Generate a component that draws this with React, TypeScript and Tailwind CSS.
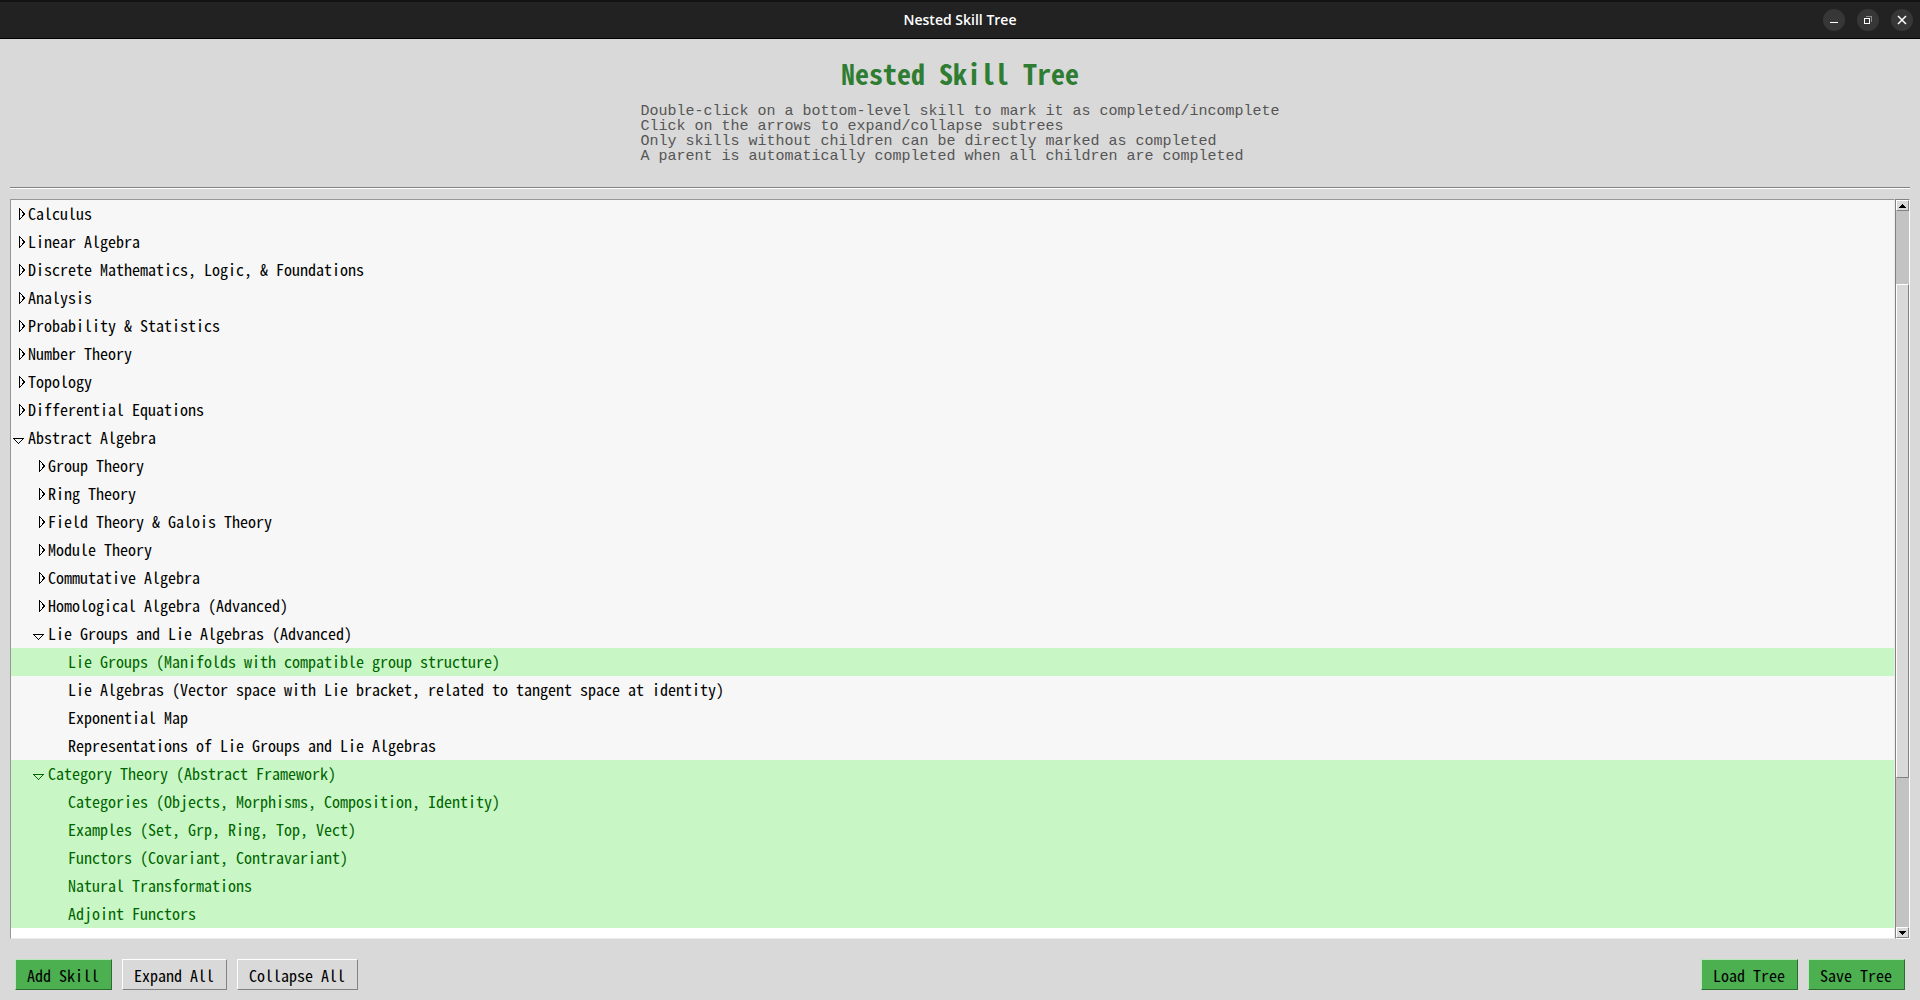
import { useState } from "react";

type Node = { name: string; done?: boolean; open?: boolean; children?: Node[] };

const branch = (name: string): Node => ({ name, children: [] });

const TREE: Node[] = [
  branch("Calculus"),
  branch("Linear Algebra"),
  branch("Discrete Mathematics, Logic, & Foundations"),
  branch("Analysis"),
  branch("Probability & Statistics"),
  branch("Number Theory"),
  branch("Topology"),
  branch("Differential Equations"),
  {
    name: "Abstract Algebra",
    open: true,
    children: [
      branch("Group Theory"),
      branch("Ring Theory"),
      branch("Field Theory & Galois Theory"),
      branch("Module Theory"),
      branch("Commutative Algebra"),
      branch("Homological Algebra (Advanced)"),
      {
        name: "Lie Groups and Lie Algebras (Advanced)",
        open: true,
        children: [
          { name: "Lie Groups (Manifolds with compatible group structure)", done: true },
          { name: "Lie Algebras (Vector space with Lie bracket, related to tangent space at identity)" },
          { name: "Exponential Map" },
          { name: "Representations of Lie Groups and Lie Algebras" },
        ],
      },
      {
        name: "Category Theory (Abstract Framework)",
        done: true,
        open: true,
        children: [
          { name: "Categories (Objects, Morphisms, Composition, Identity)", done: true },
          { name: "Examples (Set, Grp, Ring, Top, Vect)", done: true },
          { name: "Functors (Covariant, Contravariant)", done: true },
          { name: "Natural Transformations", done: true },
          { name: "Adjoint Functors", done: true },
        ],
      },
    ],
  },
];

const INDENT = ["pl-px", "pl-[21px]", "pl-[41px]"];

function Arrow({ open }: { open: boolean }) {
  return (
    <svg width="16" height="28" viewBox="0 0 16 28" fill="none" stroke="currentColor" shapeRendering="crispEdges">
      {open ? <path d="M1.5 14.5h10l-5 5z" /> : <path d="M7.5 8.5v11l5-5.5z" />}
    </svg>
  );
}

function Row({ node, depth }: { node: Node; depth: number }) {
  const [open, setOpen] = useState(!!node.open);
  return (
    <li>
      <div
        className={`flex h-7 items-center whitespace-pre ${INDENT[depth]} ${
          node.done ? "bg-[#c8f7c5] text-[#006400]" : "bg-[#f7f7f7] text-black"
        }`}
      >
        {node.children ? (
          <button aria-label={`Toggle ${node.name}`} aria-expanded={open} onClick={() => setOpen(!open)} className="w-4">
            <Arrow open={open} />
          </button>
        ) : (
          <span className="w-4" />
        )}
        <span className="pb-0.5">{node.name}</span>
      </div>
      {open && node.children && (
        <ul>
          {node.children.map((c) => (
            <Row key={c.name} node={c} depth={depth + 1} />
          ))}
        </ul>
      )}
    </li>
  );
}

function ToolButton({ label, green }: { label: string; green?: boolean }) {
  return (
    <button
      className={`h-[31px] border pr-3 pl-[11px] leading-7 text-black ${
        green
          ? "border-t-[#b9e6bb] border-r-[#2e6b31] border-b-[#2e6b31] border-l-[#b9e6bb] bg-[#4caf50]"
          : "border-t-white border-r-[#828282] border-b-[#828282] border-l-white bg-[#d9d9d9]"
      }`}
    >
      {label}
    </button>
  );
}

function ScrollArrow({ label, down }: { label: string; down?: boolean }) {
  return (
    <button
      aria-label={label}
      className="flex h-[11px] items-center justify-center border border-t-white border-r-[#828282] border-b-[#828282] border-l-white bg-[#d9d9d9]"
    >
      <svg width="7" height="4" viewBox="0 0 7 4" fill="#000" shapeRendering="crispEdges">
        {down ? <path d="M0 0h7v1h-1v1h-1v1h-1v1h-1v-1h-1v-1h-1v-1h-1z" /> : <path d="M3 0h1v1h1v1h1v1h1v1h-7v-1h1v-1h1v-1h1z" />}
      </svg>
    </button>
  );
}

const WINDOW_BUTTON = "flex size-[22px] items-center justify-center rounded-full bg-[#373737]";

export default function App() {
  return (
    <div className="flex min-h-screen flex-col bg-[#d9d9d9] font-['Noto_Sans_Mono_CJK_SC','Liberation_Mono',monospace] text-base">
      <div className="grid h-[39px] grid-cols-[1fr_auto_1fr] items-center border-t-2 border-b border-t-[#131313] border-b-black bg-[#222222] px-[7px]">
        <span />
        <span className="font-['Open_Sans',sans-serif] text-sm font-semibold text-white">Nested Skill Tree</span>
        <div className="flex justify-end gap-3">
          <button aria-label="Minimize" className={WINDOW_BUTTON}>
            <svg width="10" height="10" viewBox="0 0 10 10" fill="#fff" shapeRendering="crispEdges">
              <path d="M1 7h8v1h-8z" />
            </svg>
          </button>
          <button aria-label="Restore" className={WINDOW_BUTTON}>
            <svg width="10" height="10" viewBox="0 0 10 10" fill="none" shapeRendering="crispEdges">
              <path d="M3 1.5h5.5v5.5" stroke="#8c8c8c" />
              <path d="M1.5 3.5h5v5h-5z" stroke="#fff" />
            </svg>
          </button>
          <button aria-label="Close" className={WINDOW_BUTTON}>
            <svg width="10" height="10" viewBox="0 0 10 10" fill="none" stroke="#fff" strokeWidth="1.5">
              <path d="M1 1l8 8M9 1l-8 8" />
            </svg>
          </button>
        </div>
      </div>

      <header className="flex flex-col items-center pt-[14px] pb-[23px]">
        <h1 className="h-[51px] text-[28px] leading-10 font-bold text-[#2e7d32]">Nested Skill Tree</h1>
        <p className="font-['Liberation_Mono',monospace] text-[15px] leading-[15px] whitespace-pre text-[#555555]">
          Double-click on a bottom-level skill to mark it as completed/incomplete
          <br />
          Click on the arrows to expand/collapse subtrees
          <br />
          Only skills without children can be directly marked as completed
          <br />A parent is automatically completed when all children are completed
        </p>
      </header>

      <hr className="mx-[10px] h-[2px] border-t border-b border-t-[#828282] border-b-white" />

      <main className="mx-[10px] mt-[10px] flex flex-1">
        <div className="flex-1 border border-t-[#979797] border-r-[#ebebeb] border-b-[#ebebeb] border-l-[#979797] bg-white">
          <ul>
            {TREE.map((n) => (
              <Row key={n.name} node={n} depth={0} />
            ))}
          </ul>
        </div>
        <div className="flex w-[15px] flex-col border border-t-[#828282] border-r-white border-b-white border-l-[#828282] bg-[#c3c3c3]">
          <ScrollArrow label="Scroll up" />
          <div className="grow-[73]" />
          <div className="grow-[494] border border-t-white border-r-[#828282] border-b-[#828282] border-l-white bg-[#d9d9d9]" />
          <div className="grow-[149]" />
          <ScrollArrow label="Scroll down" down />
        </div>
      </main>

      <footer className="flex gap-[10px] px-[15px] pt-5 pb-[10px]">
        <ToolButton label="Add Skill" green />
        <ToolButton label="Expand All" />
        <ToolButton label="Collapse All" />
        <span className="flex-1" />
        <ToolButton label="Load Tree" green />
        <ToolButton label="Save Tree" green />
      </footer>
    </div>
  );
}
